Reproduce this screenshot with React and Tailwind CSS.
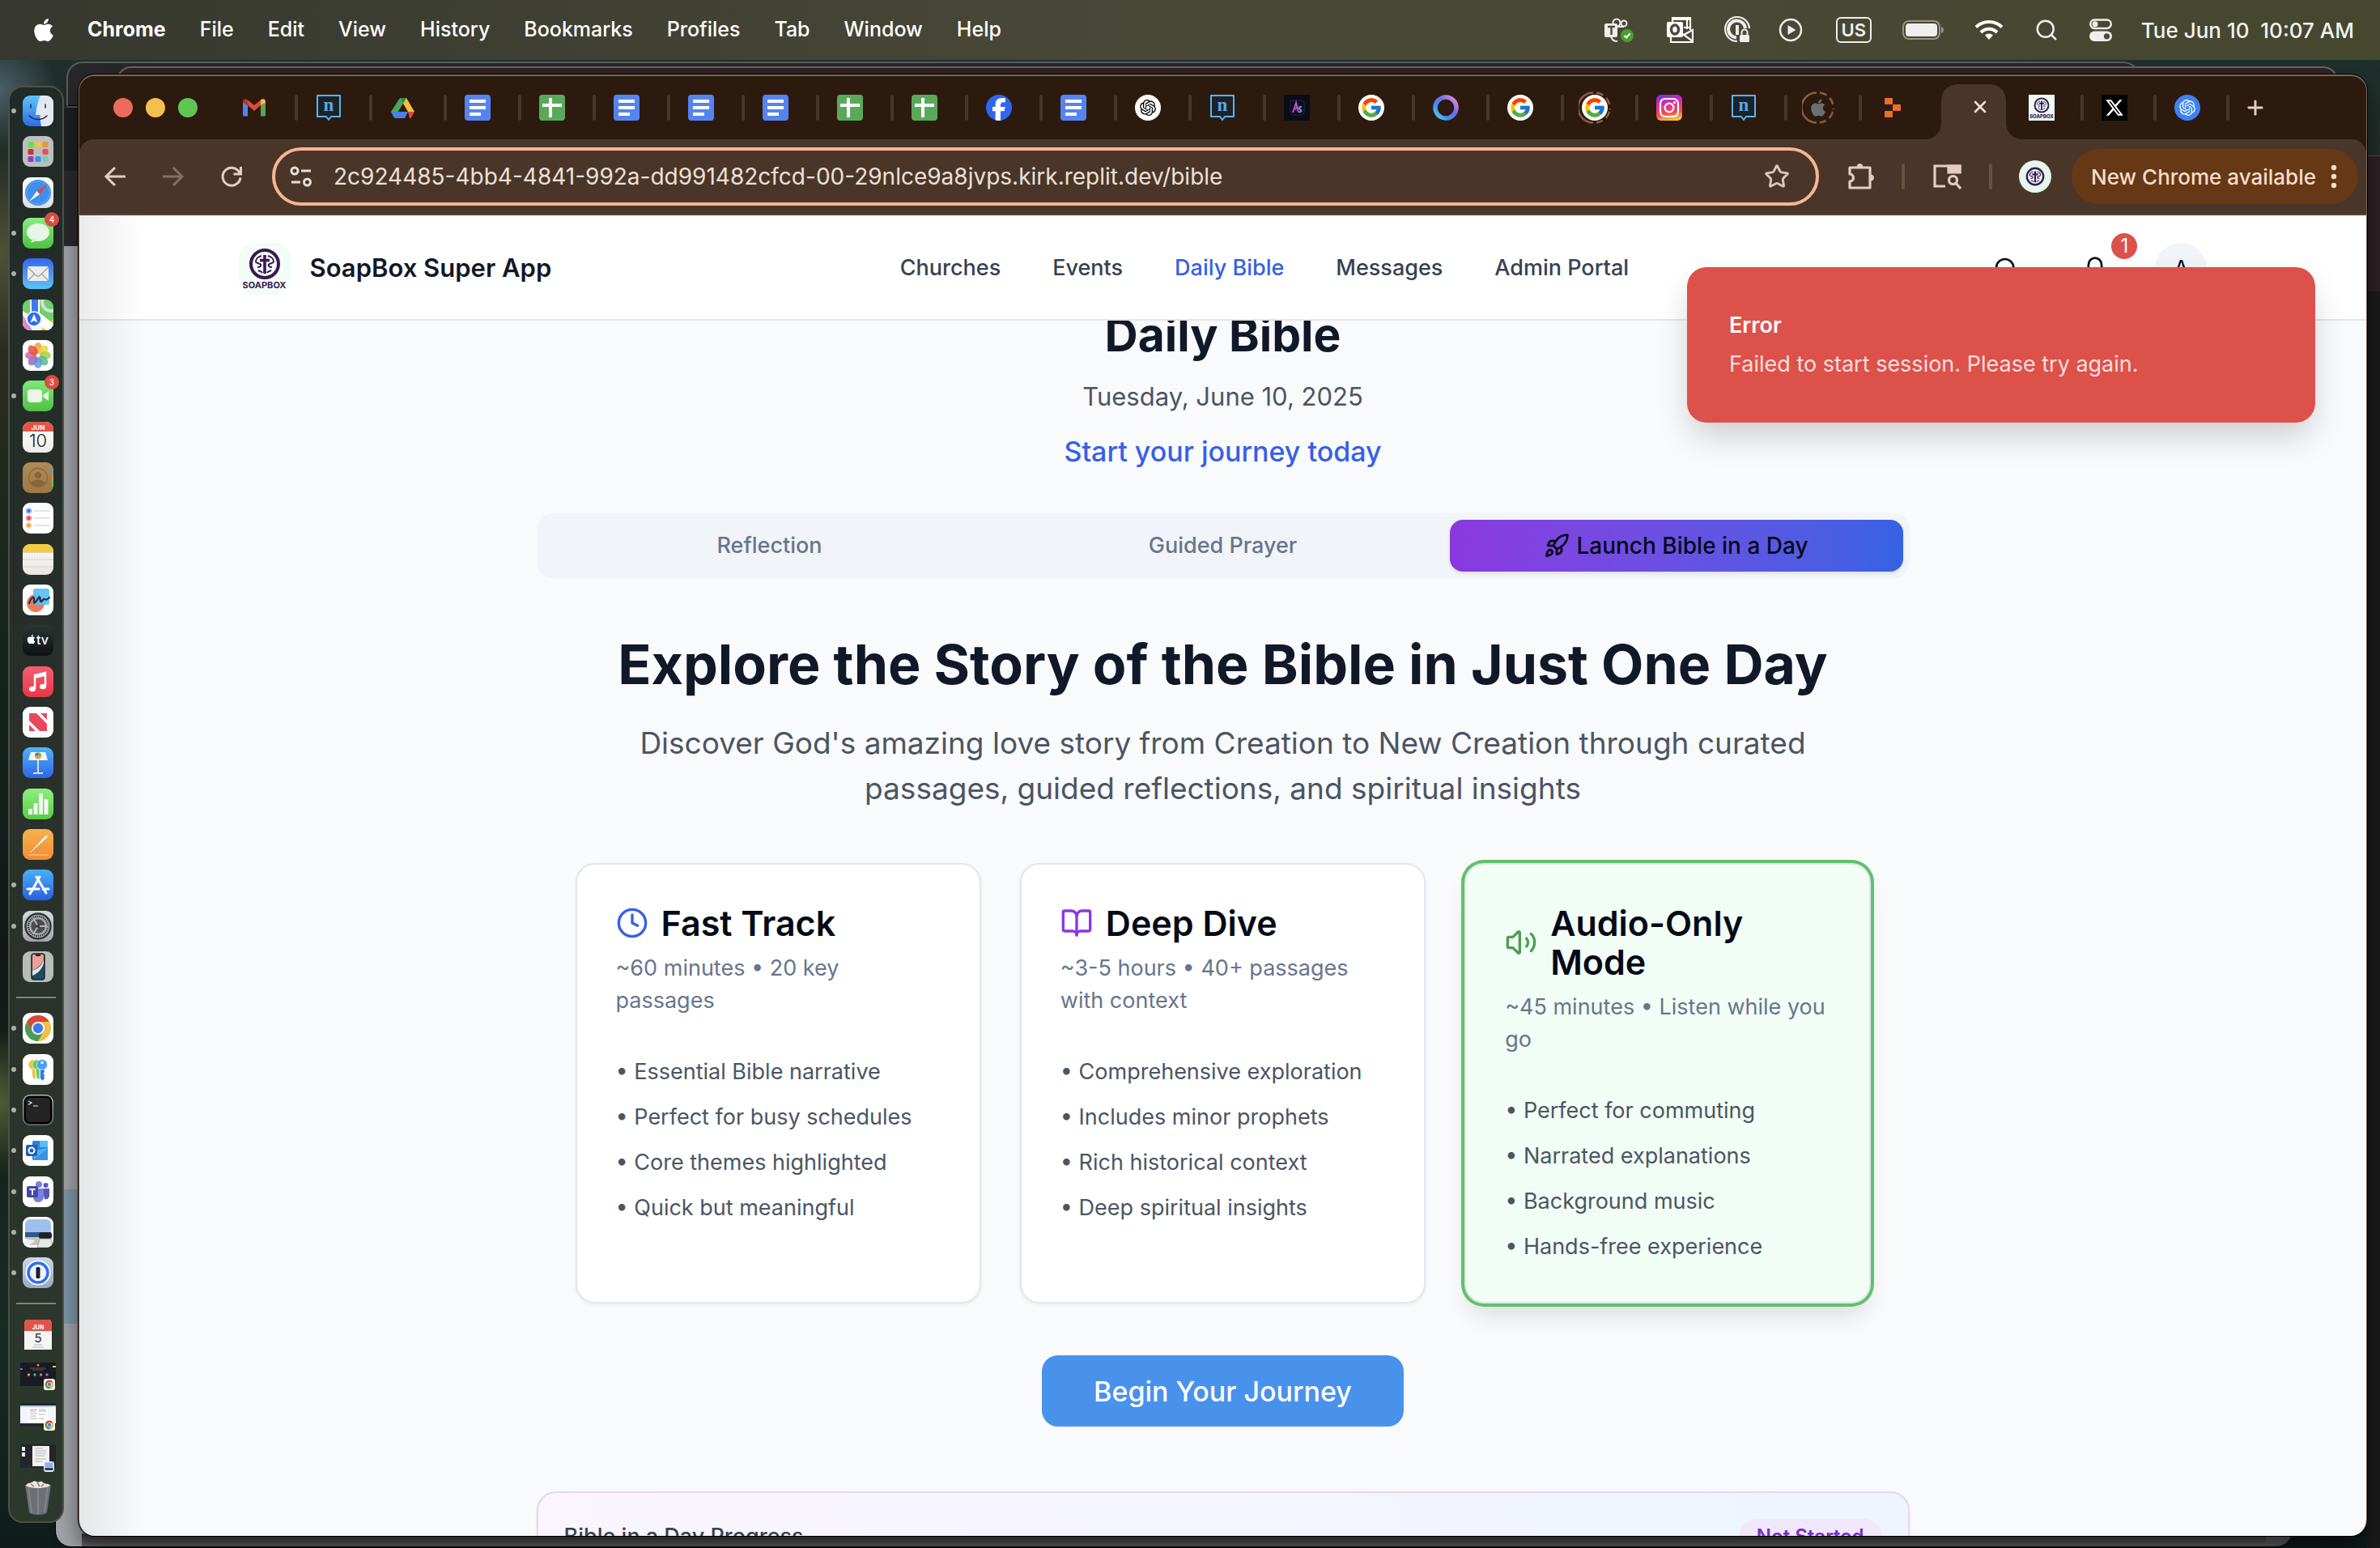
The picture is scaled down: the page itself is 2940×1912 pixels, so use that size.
import React from "react";
import { Rocket, Clock, BookOpen, Volume2, Search, Bell, Star, X, Plus } from "lucide-react";
import { FaApple, FaFacebookF, FaXTwitter } from "react-icons/fa6";
import { FcGoogle } from "react-icons/fc";
import { RiOpenaiFill } from "react-icons/ri";

/* ---------- shared marks ---------- */

function SoapMark({ className }) {
  return (
    <svg viewBox="0 0 40 40" className={className} fill="none" stroke="#3b1a4f" aria-hidden="true">
      <circle cx="20" cy="20" r="17" strokeWidth="4" />
      <path d="M20 9v23M14 15.500h12" strokeWidth="3.600" />
      <path d="M16 10c-4 1-7 4-7 7 0 2 3 2 5 3s2 4-3 4M24 10c4 1 7 4 7 7 0 2-3 2-5 3s-2 4 3 4M12 28c2 1 4 1 5 3M28 28c-2 1-4 1-5 3" strokeWidth="2" />
    </svg>
  );
}

/* ---------- favicons ---------- */

function Gmail() {
  return (
    <svg viewBox="0 0 32 32" className="size-8" aria-hidden="true">
      <path d="M2 9v16c0 1 .700 1.500 1.500 1.500H8V13z" fill="#4f86ec" />
      <path d="M30 9v16c0 1-.700 1.500-1.500 1.500H24V13z" fill="#55a557" />
      <path d="M8 13V6.500l8 6.500 8-6.500V13l-8 7z" fill="#dd4b3e" />
      <path d="M2 9c0-4 3.500-4.500 6-2.500V13l-6-3z" fill="#b3332b" />
      <path d="M30 9c0-4-3.500-4.500-6-2.500V13l6-3z" fill="#f3bf42" />
    </svg>
  );
}

function Notes() {
  return (
    <svg viewBox="0 0 32 32" className="size-8" aria-hidden="true">
      <path d="M2 1h28v26H19l-3 4-3-4H2z" fill="#1d2226" stroke="#58b4f5" strokeWidth="2" strokeLinejoin="round" />
      <text x="16" y="20" textAnchor="middle" fontFamily="Liberation Serif, serif" fontSize="23" fontWeight="700" fill="#5aa9e6">n</text>
    </svg>
  );
}

function Drive() {
  return (
    <svg viewBox="0 0 32 32" className="size-8" aria-hidden="true">
      <path d="M12 4h8L8 24l-3 4-4-7z" fill="#4fa45a" />
      <path d="M12 4h8l10 17h-8z" fill="#f3bf42" />
      <path d="M12 4l4 7 4-7z" fill="#2f8a48" />
      <path d="M1 21h21l-4 8H7c-1 0-2-.500-2.500-1.500z" fill="#4a7fe8" />
      <path d="M22 21h8l-3.500 6.500c-.500 1-1.500 1.500-2.500 1.500z" fill="#d94a3d" />
    </svg>
  );
}

function Doc() {
  return (
    <svg viewBox="0 0 32 32" className="size-8" aria-hidden="true">
      <rect width="32" height="32" rx="4" fill="#5584ef" />
      <path d="M6 8h20M6 16h20M6 24h14" stroke="#fff" strokeWidth="4" />
    </svg>
  );
}

function Sheet() {
  return (
    <svg viewBox="0 0 32 32" className="size-8" aria-hidden="true">
      <rect width="32" height="32" rx="4" fill="#5aa95b" />
      <path d="M4 13h24M14 4v24" stroke="#fff" strokeWidth="4" />
    </svg>
  );
}

function Facebook() {
  return (
    <span className="flex size-8 items-end justify-center overflow-hidden rounded-full bg-[#2f66f0] text-white">
      <FaFacebookF className="size-7" />
    </span>
  );
}

function OpenAI() {
  return (
    <span className="flex size-8 items-center justify-center rounded-full bg-white text-black">
      <RiOpenaiFill className="size-6" />
    </span>
  );
}

function OpenAIBlue() {
  return (
    <span className="flex size-8 items-center justify-center rounded-full bg-[#3c83f0] text-white">
      <RiOpenaiFill className="size-6" />
    </span>
  );
}

function StudioMark() {
  return (
    <svg viewBox="0 0 32 32" className="size-8" aria-hidden="true">
      <rect width="32" height="32" fill="#0a0c18" />
      <rect x="8" y="7" width="17" height="18" rx="4" fill="none" stroke="#1e2c44" />
      <path d="M11 22l4-12 3 12M12 18c3 0 4-2 5-3" fill="none" stroke="#c04fc9" strokeWidth="2" />
      <path d="M22 15c-3-1-4 2-2 3s2 4-1 3" fill="none" stroke="#6d8fe0" strokeWidth="2" />
    </svg>
  );
}

function Google() {
  return (
    <span className="flex size-8 items-center justify-center rounded-full bg-white">
      <FcGoogle className="size-7" />
    </span>
  );
}

function RingMark() {
  return (
    <svg viewBox="0 0 32 32" className="size-8" aria-hidden="true">
      <defs>
        <linearGradient id="ring" x1="1" y1="0" x2="0" y2="1">
          <stop offset="0" stopColor="#ef8fd0" />
          <stop offset="0.400" stopColor="#6d6cf0" />
          <stop offset="0.700" stopColor="#3f8df2" />
          <stop offset="1" stopColor="#5fd6e6" />
        </linearGradient>
      </defs>
      <circle cx="16" cy="16" r="13" fill="none" stroke="url(#ring)" strokeWidth="5.500" />
    </svg>
  );
}

function Loading({ children }) {
  return (
    <span className="relative -mx-1 flex size-10 items-center justify-center">
      <svg viewBox="0 0 40 40" className="absolute inset-0 size-10" fill="none" stroke="#8d5c3f" strokeWidth="2.500" aria-hidden="true">
        <path d="M18 1.500A18.500 18.500 0 0 0 18 38.500" />
        <path d="M22 1.500A18.500 18.500 0 0 1 38.500 22M38 25A18.500 18.500 0 0 1 22 38.500" strokeDasharray="9 5" />
      </svg>
      {children}
    </span>
  );
}

function Instagram() {
  return (
    <svg viewBox="0 0 32 32" className="size-8" aria-hidden="true">
      <defs>
        <linearGradient id="ig" x1="0.200" y1="0" x2="0.400" y2="1">
          <stop offset="0" stopColor="#7a2ff0" />
          <stop offset="0.400" stopColor="#e0309a" />
          <stop offset="0.750" stopColor="#f0504a" />
          <stop offset="1" stopColor="#f8c140" />
        </linearGradient>
      </defs>
      <rect width="32" height="32" rx="6" fill="url(#ig)" />
      <rect x="5" y="5" width="22" height="22" rx="6" fill="none" stroke="#fff" strokeWidth="2.200" />
      <circle cx="16" cy="16" r="5.400" fill="none" stroke="#fff" strokeWidth="2.200" />
      <circle cx="22.400" cy="9.600" r="1.600" fill="#fff" />
    </svg>
  );
}

function ReplitMark() {
  return (
    <svg viewBox="0 0 32 32" className="size-8" fill="#e86f2c" aria-hidden="true">
      <rect x="6" y="4" width="10" height="8" rx="1" />
      <rect x="16" y="12" width="10" height="8" rx="1" />
      <rect x="6" y="20" width="10" height="8" rx="1" />
    </svg>
  );
}

function SoapFavicon() {
  return (
    <span className="flex size-8 flex-col items-center justify-center bg-[#effaf4]">
      <SoapMark className="size-5" />
      <span className="text-[6px] leading-[7px] font-extrabold text-[#3b1a4f]">SOAPBOX</span>
    </span>
  );
}

function XFavicon() {
  return (
    <span className="flex size-8 items-center justify-center bg-black text-white">
      <FaXTwitter className="size-6" />
    </span>
  );
}

const tabsBefore = [
  ["Gmail", Gmail], ["Notes", Notes], ["Drive", Drive], ["Document", Doc], ["Spreadsheet", Sheet],
  ["Document", Doc], ["Document", Doc], ["Document", Doc], ["Spreadsheet", Sheet], ["Spreadsheet", Sheet],
  ["Facebook", Facebook], ["Document", Doc], ["ChatGPT", OpenAI], ["Notes", Notes], ["Studio", StudioMark],
  ["Google", Google], ["Ring", RingMark], ["Google", Google],
  ["Google loading", () => <Loading><Google /></Loading>],
  ["Instagram", Instagram], ["Notes", Notes],
  ["Apple loading", () => <Loading><FaApple className="size-6 text-[#6e6e70]" /></Loading>],
  ["Replit", ReplitMark],
];

const tabsAfter = [["SoapBox", SoapFavicon], ["X", XFavicon], ["ChatGPT", OpenAIBlue]];

/* ---------- menu bar ---------- */

function MenuBar() {
  const menus = ["File", "Edit", "View", "History", "Bookmarks", "Profiles", "Tab", "Window", "Help"];
  return (
    <header className="relative z-10 flex h-[74px] shrink-0 items-center justify-between bg-linear-to-r from-[#36382f] via-[#4a4938] to-[#45472f] pr-[32px] pl-[38px] text-[25px] font-medium text-white">
      <nav className="flex items-center gap-[42px]">
        <button aria-label="Apple menu" className="-mr-1 flex w-8 items-center justify-center"><FaApple className="size-8" /></button>
        <button className="font-bold">Chrome</button>
        {menus.map((m) => <button key={m}>{m}</button>)}
      </nav>
      <div className="flex items-center">
        <svg viewBox="0 0 40 34" className="mr-[38px] h-[34px] w-10" aria-label="Teams">
          <circle cx="17" cy="8" r="4.500" fill="none" stroke="#eee" strokeWidth="2" />
          <circle cx="26" cy="9" r="3.500" fill="none" stroke="#eee" strokeWidth="2" />
          <path d="M18 13h8M10 23c0 6 4 8 8 8" fill="none" stroke="#eee" strokeWidth="2" />
          <rect x="2" y="9" width="16" height="17" rx="2" fill="#eee" />
          <path d="M6 13h9M10.500 13v10" stroke="#4b4b38" strokeWidth="2.500" />
          <circle cx="30" cy="24" r="8" fill="#4a9f2e" />
          <path d="M26.500 24l2.500 2.500 4.500-5" fill="none" stroke="#fff" strokeWidth="2" />
        </svg>
        <svg viewBox="0 0 34 34" className="mr-[37px] size-[34px]" fill="none" stroke="#fff" strokeWidth="2.200" aria-label="Outlook">
          <path d="M8 8V2h22v15M8 4h22M22 14h8M26 4v12" />
          <path d="M6 24v8h27V17L22 23l11 8M22 23l-3-1" />
          <rect x="1" y="7" width="20" height="19" rx="2" fill="#fff" stroke="none" />
          <ellipse cx="11" cy="16.500" rx="4.500" ry="5.500" stroke="#4b4b38" strokeWidth="3.500" />
        </svg>
        <svg viewBox="0 0 34 34" className="mr-[34px] size-[34px]" fill="none" stroke="#eee" aria-label="1Password">
          <path d="M17 31A15 15 0 1 1 32 15" strokeWidth="2.200" />
          <path d="M16 26.500A10.500 10.500 0 1 1 27 15" strokeWidth="4" />
          <path d="M17 11v12" strokeWidth="4" />
          <rect x="20" y="23" width="12" height="9" rx="1.500" fill="#eee" stroke="none" />
          <path d="M22.500 23v-3a3.500 3.500 0 0 1 7 0v3" strokeWidth="2" />
        </svg>
        <svg viewBox="0 0 30 30" className="mr-[41px] size-[30px]" aria-label="Now playing">
          <circle cx="15" cy="15" r="13" fill="none" stroke="#eee" strokeWidth="2.500" />
          <path d="M11.500 9l10 6-10 6z" fill="#eee" />
        </svg>
        <span className="mr-[38px] flex h-8 w-11 items-center justify-center rounded-md border-2 border-[#eee] text-[22px] leading-none font-semibold text-[#eee]">US</span>
        <svg viewBox="0 0 52 24" className="mr-[37px] h-6 w-[52px]" aria-label="Battery">
          <rect x="1" y="1" width="45" height="22" rx="7" fill="none" stroke="#96958a" strokeWidth="2" />
          <rect x="4" y="4" width="39" height="16" rx="4" fill="#eee" />
          <path d="M48 8c4 1 4 7 0 8z" fill="#96958a" />
        </svg>
        <svg viewBox="0 0 36 26" className="mr-[38px] h-[26px] w-9" fill="none" stroke="#fff" strokeWidth="4" aria-label="Wi-Fi">
          <path d="M2 9.500a23 23 0 0 1 32 0M8 16a14 14 0 0 1 20 0" />
          <path d="M18 25l-5-5.500a7.500 7.500 0 0 1 10 0z" fill="#fff" stroke="none" />
        </svg>
        <Search className="mr-[38px] size-[30px] text-[#eee]" />
        <svg viewBox="0 0 28 28" className="mr-[36px] size-7" aria-label="Control Center">
          <rect x="1.200" y="1.500" width="25.600" height="10.500" rx="5.250" fill="none" stroke="#eee" strokeWidth="2.400" />
          <circle cx="7" cy="6.800" r="3.500" fill="#eee" />
          <rect y="15.500" width="28" height="12.500" rx="6.250" fill="#eee" />
          <circle cx="21.500" cy="21.800" r="3.600" fill="#4b4b38" />
        </svg>
        <span className="text-[26px] whitespace-pre text-[#f2f2ee]">Tue Jun 10  10:07 AM</span>
      </div>
    </header>
  );
}

/* ---------- dock ---------- */

function Tile({ fill = "#fff", to, children }) {
  const id = React.useId();
  return (
    <svg viewBox="0 0 38 38" className="size-[38px]" aria-hidden="true">
      <defs>
        <linearGradient id={id} x1="0" y1="0" x2="0" y2="1">
          <stop offset="0" stopColor={fill} />
          <stop offset="1" stopColor={to || fill} />
        </linearGradient>
        <clipPath id={id + "c"}><rect width="38" height="38" rx="9" /></clipPath>
      </defs>
      <g clipPath={`url(#${id + "c"})`}>
        <rect width="38" height="38" fill={`url(#${id})`} />
        {children}
      </g>
    </svg>
  );
}

const petals = ["#f0a03c", "#e8d63c", "#a9cf45", "#5cb98f", "#5a9fdc", "#8a70c8", "#c86aa8", "#e8503c"];

function ChromeBall({ cx = 19, cy = 19, r = 16 }) {
  return (
    <g transform={`translate(${cx} ${cy}) scale(${r / 16})`}>
      <circle r="16" fill="#f3bf42" />
      <path d="M0-8H13.860A16 16 0 0 0-13.860-8L-6.900 4z" fill="#d5493c" />
      <path d="M-13.860-8A16 16 0 0 0 0 16L6.900 4 0 8-6.900 4z" fill="#4a9d55" />
      <circle r="8" fill="#fff" />
      <circle r="6.200" fill="#3f7be8" />
    </g>
  );
}

const dockApps = [
  ["Finder", true, null, <Tile fill="#5cc4f8" to="#2f6be8"><path d="M22 0h16v38H23c-1-5-1.500-9-1.500-14H16C17 14 19 6 22 0z" fill="#e4e8ef" /><path d="M10 11v4M28 11v4" stroke="#20304a" strokeWidth="1.500" strokeLinecap="round" /><path d="M8 25c6 6 16 6 22 0" fill="none" stroke="#20304a" strokeWidth="1.500" strokeLinecap="round" /></Tile>],
  ["Launchpad", false, null, <Tile fill="#bcbfbf">{["#6fdc4f", "#f3c33c", "#e8963a", "#d3322a", "#b5bcc0", "#ee4a60", "#8a3fd0", "#3c8cf2", "#6fd0b0"].map((c, i) => <rect key={i} x={6.500 + (i % 3) * 9} y={7 + Math.floor(i / 3) * 9} width="7" height="7" rx="1.500" fill={c} />)}</Tile>],
  ["Safari", false, null, <Tile fill="#ffffff" to="#dcdde0"><circle cx="19" cy="19" r="16" fill="#3f8fec" /><circle cx="19" cy="19" r="14" fill="none" stroke="#9ccaf8" strokeWidth="1.500" strokeDasharray="0.600 1.600" /><path d="M31 8L21 21l-3.500-4z" fill="#e5443a" /><path d="M8 30l9.500-13 3.500 4z" fill="#f4f4f4" /></Tile>],
  ["Messages", true, "4", <Tile fill="#86ef7e" to="#4ec143"><ellipse cx="19" cy="18" rx="14" ry="11" fill="#e9f5e6" /><path d="M12 25c0 3-1 4-3 5 4 1 7-1 9-3z" fill="#d9ecd5" /></Tile>],
  ["Mail", true, null, <Tile fill="#3566e8" to="#5cc3f8"><rect x="6" y="10" width="26" height="18" rx="2" fill="#ececec" /><path d="M6 11l10.500 10c1.500 1.500 3.500 1.500 5 0L32 11M6 28l9-9M32 28l-9-9" fill="none" stroke="#9a9ea3" strokeWidth="1.200" /></Tile>],
  ["Maps", false, null, <Tile fill="#6ed06a"><path d="M0 14l38 24H0z" fill="#f5f5f5" /><path d="M0 19l12 19H0z" fill="#d98bd0" /><path d="M22 38l16-14v14z" fill="#f0c93c" /><path d="M18 14l20 16v8h-8L14 26z" fill="#fff" /><rect x="9" y="-2" width="12" height="24" fill="#fff" /><rect x="11" y="-2" width="8" height="24" fill="#3a78ee" /><circle cx="35" cy="3" r="11" fill="none" stroke="#d8dcdc" strokeWidth="4" /><circle cx="14" cy="24" r="9" fill="#2f6fe8" stroke="#fff" strokeWidth="1.500" /><path d="M14 18l4.500 10.500L14 26l-4.500 2.500z" fill="#fff" /></Tile>],
  ["Photos", false, null, <Tile>{petals.map((c, i) => <ellipse key={c} cx="19" cy="10" rx="5" ry="7" fill={c} opacity="0.850" transform={`rotate(${i * 45} 19 19)`} />)}</Tile>],
  ["FaceTime", true, "3", <Tile fill="#7eea77" to="#4fc144"><rect x="6" y="11" width="18" height="16" rx="4" fill="#eef3ec" /><path d="M25 18l7-5v12l-7-5z" fill="#eef3ec" /></Tile>],
  ["Calendar", false, null, <Tile fill="#ffffff" to="#ececea"><rect width="38" height="12" fill="#e2544a" /><text x="19" y="9.500" textAnchor="middle" fontSize="8" fontWeight="700" fill="#fff" fontFamily="Inter, sans-serif">JUN</text><text x="19" y="31" textAnchor="middle" fontSize="22" fill="#222" fontWeight="300" fontFamily="Inter, sans-serif">10</text></Tile>],
  ["Contacts", false, null, <Tile fill="#b08a56" to="#9c7846"><rect x="36" y="8" width="2" height="7" fill="#4fa6e8" /><rect x="36" y="15" width="2" height="7" fill="#ee8a3a" /><rect x="36" y="22" width="2" height="8" fill="#5fc85a" /><circle cx="19" cy="19" r="11.500" fill="none" stroke="#87673a" strokeWidth="1.300" /><circle cx="19" cy="16" r="4.300" fill="#87673a" /><path d="M10 26c3-6 15-6 18 0-4 5-14 5-18 0z" fill="#87673a" /></Tile>],
  ["Reminders", false, null, <Tile>{["#2f72ee", "#e5443a", "#f09a36"].map((c, i) => <g key={c}><circle cx="7.500" cy={10 + i * 9} r="2.200" fill={c} /><circle cx="7.500" cy={10 + i * 9} r="3.200" fill="none" stroke={c} strokeWidth="0.700" /><path d={`M14 ${10 + i * 9}h20`} stroke="#c9c9c9" /></g>)}</Tile>],
  ["Notes app", false, null, <Tile fill="#fbfaf7" to="#e9e7e2"><rect width="38" height="10" fill="#f6ca3e" /><path d="M0 10.500h38" stroke="#b6b0a0" strokeDasharray="1 1" /><path d="M0 19h38M0 28h38" stroke="#d2d0cb" /></Tile>],
  ["Freeform", false, null, <Tile><circle cx="16" cy="23" r="11" fill="#ee7a5a" /><rect x="13" y="5" width="20" height="20" rx="2" fill="#57bff0" opacity="0.900" /><path d="M8 23c3-8 7-10 6-3s4-1 6-4 1 6 3 5 2-4 4-3 3 1 6-2" fill="none" stroke="#17324f" strokeWidth="2.200" strokeLinecap="round" /></Tile>],
  ["TV", false, null, <Tile fill="#2a3634" to="#0d1112"><text x="17" y="24" fontSize="16" fontWeight="500" fill="#fff" fontFamily="Inter, sans-serif">tv</text><FaApple x="4" y="11" size="13" color="#fff" /></Tile>],
  ["Music", false, null, <Tile fill="#f65d72" to="#e63848"><path d="M15 28V11l13-3v16" fill="none" stroke="#fff" strokeWidth="2.500" /><path d="M15 11l13-3v4l-13 3z" fill="#fff" /><ellipse cx="12" cy="28" rx="4" ry="3.200" fill="#fff" /><ellipse cx="25" cy="25" rx="4" ry="3.200" fill="#fff" /></Tile>],
  ["News", false, null, <Tile><path d="M8 8h9l13 13v9h-9L8 17z" fill="#e8485e" /><path d="M22 8h8v8zM8 22v8h8z" fill="#e8485e" /></Tile>],
  ["Keynote", false, null, <Tile fill="#4fb4f8" to="#2f66e6"><path d="M10 6h18l3 10H7z" fill="#f5f5f5" /><circle cx="19" cy="10.500" r="4" fill="#e9a23c" /><path d="M19 10.500v-4a4 4 0 0 1 4 4z" fill="#5cb860" /><path d="M19 10.500h-4a4 4 0 0 1 4-4z" fill="#4a7fe8" /><path d="M19 16v16M13 32h12" stroke="#d8dde3" strokeWidth="2" /></Tile>],
  ["Numbers", false, null, <Tile fill="#8ef07c" to="#55cc44"><path d="M9.500 32v-7M16 32V18M22.500 32V6M29 32V13" stroke="#f3f8f1" strokeWidth="5" /></Tile>],
  ["Pages", false, null, <Tile fill="#f5b44c" to="#f08c34"><path d="M7 31L26 10c2-2 4-3 5-3s0 3-2 5L10 29z" fill="#f6f1ea" stroke="#c88a4a" strokeWidth="0.500" /><path d="M7 32h25" stroke="#fbd9a6" strokeWidth="1.200" /></Tile>],
  ["App Store", true, null, <Tile fill="#4ab0f6" to="#2a5fe0"><path d="M21 9L11 27M17 9l12 20M6 24h14M25 24h7M9 30l1-2" stroke="#fff" strokeWidth="3" strokeLinecap="round" /></Tile>],
  ["Settings", true, null, <Tile fill="#d0dbe1" to="#a4a5a8"><circle cx="19" cy="19" r="15.500" fill="#b5b7b9" stroke="#333" strokeWidth="2.500" /><circle cx="19" cy="19" r="12" fill="none" stroke="#333" strokeWidth="2.500" strokeDasharray="1.500 1" /><circle cx="19" cy="19" r="9" fill="#4a4c4e" stroke="#8b8d8f" /><path d="M19 19h12M19 19l-6-10M19 19l-6 10" stroke="#b5b7b9" strokeWidth="2" /><circle cx="19" cy="19" r="2" fill="#333" /></Tile>],
  ["iPhone Mirroring", false, null, <Tile fill="#b9bdb9"><rect x="11" y="3" width="16" height="32" rx="3" fill="#1d4a66" /><path d="M12 4h14c0 10-3 14-14 20z" fill="#eda093" /><path d="M26 8c-1 9-6 13-14 16v6c8-3 12-9 14-15z" fill="#d9e6ea" /><rect x="11" y="3" width="16" height="32" rx="3" fill="none" stroke="#22282c" strokeWidth="1.500" /><path d="M16 5h6" stroke="#22282c" strokeWidth="2" /></Tile>],
];

const dockRunning = [
  ["Chrome", true, null, <Tile><ChromeBall /></Tile>],
  ["Passwords", true, null, <Tile><g stroke="#fff" strokeWidth="0.600"><circle cx="13" cy="13" r="6" fill="#f0c040" /><path d="M11 18h5v14l-4-3z" fill="#f0c040" /><circle cx="18" cy="13" r="6" fill="#62c962" /><path d="M16 18h5v14l-4-3z" fill="#62c962" /><circle cx="24" cy="13" r="6.500" fill="#4a9df2" /><path d="M21.500 19h5l1 3-2 2 2 2-1 2 1 2-3 3-3-3z" fill="#2f78ea" /></g><circle cx="24" cy="10.500" r="1.700" fill="#fff" /></Tile>],
  ["Terminal", true, null, <Tile fill="#a8bcbc" to="#6d7b7b"><rect x="1.500" y="1.500" width="35" height="35" rx="7.500" fill="#000" /><rect x="4" y="4" width="30" height="30" rx="5" fill="#242424" /><path d="M7 8l4 2-4 2.500M13 14h6" fill="none" stroke="#eee" strokeWidth="1.200" /></Tile>],
  ["Outlook", true, null, <Tile><rect x="12" y="7" width="19" height="24" rx="2" fill="#2f7fd6" /><rect x="21" y="7" width="10" height="8" fill="#57bdf2" /><path d="M12 19l19-3v15H14z" fill="#4fb0ee" /><path d="M12 31l19-14v14z" fill="#3a93e0" /><rect x="4" y="12" width="14" height="14" rx="2" fill="#1e5fb8" /><circle cx="11" cy="19" r="3.500" fill="none" stroke="#fff" strokeWidth="2" /></Tile>],
  ["Teams", true, null, <Tile><circle cx="20" cy="10" r="4" fill="#7a80e0" /><circle cx="28.500" cy="11" r="3" fill="#5459b8" /><path d="M24 15h9v8c0 4-3 6-6 5z" fill="#5459b8" /><path d="M13 15h13v10c0 4-3 7-7 7s-6-3-6-7z" fill="#7a80e0" /><rect x="5" y="12" width="14" height="14" rx="2" fill="#4349a5" /><path d="M8.500 16h7M12 16v7" stroke="#fff" strokeWidth="1.800" /></Tile>],
  ["Preview", true, null, <Tile><rect x="3" y="3" width="32" height="32" rx="6" fill="#9fc0ee" /><path d="M3 19h32v6H3z" fill="#2f5a8a" /><path d="M3 25h32v10H3z" fill="#c9c3b6" /><path d="M3 27l12 2-6 6H3z" fill="#eef0f0" /><rect x="20" y="19" width="16" height="8" rx="3" fill="#202224" /><path d="M21 27h14l3 11H18z" fill="#e4e6e8" stroke="#888" strokeWidth="0.700" /></Tile>],
  ["1Password", true, null, <Tile fill="#cdd6e6" to="#9ba7bd"><circle cx="19" cy="19" r="15.500" fill="#fff" /><circle cx="19" cy="19" r="12" fill="#f3f7fd" stroke="#2f6fee" strokeWidth="3.500" /><rect x="16.500" y="12" width="5" height="14" rx="1.500" fill="#15203a" /></Tile>],
];

function Thumb({ dark, light, children }) {
  return (
    <svg viewBox="0 0 44 36" className="h-9 w-11" aria-hidden="true">
      <rect y="2" width="44" height="29" fill={dark ? "#1a1b22" : "#23262a"} />
      {light && <rect y="5" width="44" height="22" fill="#f2f5fb" />}
      {children}
    </svg>
  );
}

const dockFiles = [
  ["June 5 file", false, null, <svg viewBox="0 0 38 40" className="h-10 w-[38px]" aria-hidden="true"><path d="M4 1h30l2 4v33H2V5z" fill="#f5f5f3" /><path d="M4 1h30l2 4v10H2V5z" fill="#e0544a" /><text x="19" y="13" textAnchor="middle" fontSize="7" fontWeight="700" fill="#fff" fontFamily="Inter, sans-serif">JUN</text><text x="19" y="29" textAnchor="middle" fontSize="15" fill="#222" fontFamily="Inter, sans-serif">5</text><path d="M14 32h10M12 35h14" stroke="#aaa" strokeWidth="0.800" /></svg>],
  ["Chrome window", false, null, <Thumb dark><g><path d="M12 9h20M15 11h14" stroke="#55575f" /><circle cx="22" cy="5" r="1.500" fill="#e88b5a" />{["#e8985a", "#4ab890", "#e07a5a", "#9a6ae0"].map((c, i) => <circle key={c} cx={10.500 + i * 7.500} cy="17" r="1.700" fill={c} />)}<rect x="40" y="6" width="4" height="2" fill="#f0c93c" /><rect y="9" width="3" height="2" fill="#4a7fe8" /></g><rect x="29" y="22" width="14" height="14" rx="3" fill="#fff" /><ChromeBall cx={36} cy={29} r={5.500} /></Thumb>],
  ["Document window", false, null, <Thumb light><path d="M0 6h44" stroke="#bcd0ee" strokeWidth="2" /><rect x="10" y="8" width="24" height="19" fill="#fff" /><path d="M12 10h9M12 12h8M12 15h9M12 18h7M12 21h9M23 10h8M23 12h9M23 16h8M23 21h6" stroke="#8a8d92" strokeWidth="0.700" /><rect x="29" y="22" width="14" height="14" rx="3" fill="#fff" /><ChromeBall cx={36} cy={29} r={5.500} /></Thumb>],
  ["Preview window", false, null, <Thumb><rect x="15" y="4" width="21" height="25" fill="#f2f2f2" /><path d="M18 7h10M18 10h14M18 13h14M18 16h12M18 20h14M18 23h9" stroke="#999" strokeWidth="0.700" /><rect x="2" y="5" width="4" height="5" fill="#eee" /><rect x="2" y="12" width="4" height="5" fill="#eee" /><rect x="29" y="23" width="13" height="13" rx="3" fill="#dfe8f4" /><rect x="30.500" y="24.500" width="10" height="6" fill="#8db4e8" /><path d="M30.500 31h10v3h-10z" fill="#2f3f55" /></Thumb>],
  ["Trash", false, null, <svg viewBox="0 0 34 44" className="h-11 w-[34px]" aria-hidden="true"><path d="M1 6l5 34c2 4 20 4 22 0L33 6z" fill="#6a7074" /><path d="M5 8l4 32M29 8l-4 32M17 9v33" stroke="#989da0" strokeWidth="2" opacity="0.500" /><path d="M2 7c2-4 5-3 7-4s3-3 6-1 5-2 8 1 6 0 9 4c-6 4-24 4-30 0z" fill="#e8e6e2" /><path d="M8 5l4 3M16 3l3 5M24 5l-3 3" stroke="#b0703c" strokeWidth="1.500" /></svg>],
];

function DockItem({ item }) {
  const [label, running, badge, icon] = item;
  return (
    <li className="flex min-h-0 flex-1 items-center">
      <span className={running ? "ml-[2px] size-[6px] rounded-full bg-[#a9b0a8]" : "ml-[2px] size-[6px]"} />
      <button aria-label={label} className="relative flex flex-1 items-center justify-center pr-[4px]">
        {icon}
        {badge && (
          <span className="absolute -top-[7px] right-1 flex size-[18px] items-center justify-center rounded-full bg-[#dd4c3f] text-[10px] font-medium text-white">{badge}</span>
        )}
      </button>
    </li>
  );
}

function Dock() {
  return (
    <nav aria-label="Dock" className="relative z-10 mt-8 mb-[31px] ml-[10px] flex w-[69px] shrink-0 flex-col rounded-[18px] border-2 border-[#4b504a] bg-linear-to-b from-[#202a26] via-[#2a302b] to-[#2c382c] py-1">
      <ul className="flex flex-[22] flex-col">{dockApps.map((i) => <DockItem key={i[0]} item={i} />)}</ul>
      <hr className="mx-2 my-3 border-t-2 border-[#7d8374]" />
      <ul className="flex flex-[7] flex-col">{dockRunning.map((i) => <DockItem key={i[0]} item={i} />)}</ul>
      <hr className="mx-2 my-3 border-t-2 border-[#7d8374]" />
      <ul className="flex flex-[5] flex-col">{dockFiles.map((i) => <DockItem key={i[0]} item={i} />)}</ul>
    </nav>
  );
}

/* ---------- browser chrome ---------- */

function Tab({ tab, narrow, last }) {
  const [label, Icon] = tab;
  return (
    <button aria-label={label} className={"flex h-8 min-w-0 items-center justify-between " + (narrow ? "w-[90px] pl-[22px]" : "w-[92px] pl-[22px]")}>
      <Icon />
      <span className={last ? "h-8 w-1" : "h-8 w-1 rounded-full bg-[#49362a]"} />
    </button>
  );
}

function TabStrip() {
  return (
    <div className="flex h-[78px] items-center pl-[42px]">
      <div className="mr-8 flex gap-4">
        <button aria-label="Close window" className="size-6 rounded-full bg-[#ec6a5e]" />
        <button aria-label="Minimize window" className="size-6 rounded-full bg-[#f4bf4f]" />
        <button aria-label="Zoom window" className="size-6 rounded-full bg-[#61c554]" />
      </div>
      {tabsBefore.map((t, i) => <Tab key={i} tab={t} last={i === tabsBefore.length - 1} />)}
      <div className="relative ml-[6px] flex h-[68px] w-20 items-center justify-center self-end rounded-t-[20px] bg-[#4a3629] pl-4 text-[#f3e3da]">
        <svg viewBox="0 0 20 20" className="absolute bottom-0 -left-5 size-5" aria-hidden="true"><path d="M20 0v20H0A20 20 0 0 0 20 0z" fill="#4a3629" /></svg>
        <svg viewBox="0 0 20 20" className="absolute -right-5 bottom-0 size-5" aria-hidden="true"><path d="M0 0v20h20A20 20 0 0 1 0 0z" fill="#4a3629" /></svg>
        <button aria-label="Close tab" className="mb-3"><X className="size-6" strokeWidth={2.500} /></button>
      </div>
      <div className="ml-[6px] flex">
        {tabsAfter.map((t) => <Tab key={t[0]} tab={t} narrow />)}
      </div>
      <button aria-label="New tab" className="ml-[18px] text-[#e6cdbf]"><Plus className="size-7" strokeWidth={2.500} /></button>
    </div>
  );
}

function Toolbar() {
  return (
    <div className="flex h-[94px] items-center rounded-t-[18px] border-b-2 border-[#574539] bg-[#4a3629] pr-[10px] pl-[30px] text-[#e6cdbf]">
      <button aria-label="Back">
        <svg viewBox="0 0 28 28" className="size-7" fill="none" stroke="currentColor" strokeWidth="3"><path d="M27 14H3M14 3L3 14l11 11" /></svg>
      </button>
      <button aria-label="Forward" className="ml-[44px] text-[#857063]">
        <svg viewBox="0 0 28 28" className="size-7" fill="none" stroke="currentColor" strokeWidth="3"><path d="M1 14h24M14 3l11 11-11 11" /></svg>
      </button>
      <button aria-label="Reload" className="ml-[44px]">
        <svg viewBox="0 0 28 28" className="size-7" fill="none" stroke="currentColor" strokeWidth="3"><path d="M25 15.500A11 11 0 1 1 22 6.500l2.500 3M25.500 2v9h-9" /></svg>
      </button>
      <label className="ml-[36px] flex h-[72px] flex-1 items-center rounded-full border-4 border-[#f5b78f] pr-8 pl-[18px]">
        <svg viewBox="0 0 28 28" className="mr-[26px] size-7 shrink-0" fill="none" stroke="#eaddd6" strokeWidth="3" aria-label="Site information">
          <circle cx="6" cy="7" r="4" /><path d="M14 7h12M2 21h11" /><circle cx="21.500" cy="21" r="4" />
        </svg>
        <input aria-label="Address" className="min-w-0 flex-1 bg-transparent text-[28px] text-[#eee0d8] outline-none" defaultValue="2c924485-4bb4-4841-992a-dd991482cfcd-00-29nlce9a8jvps.kirk.replit.dev/bible" />
        <button type="button" aria-label="Bookmark"><Star className="size-8 text-[#d9c7bc]" strokeWidth={2.200} /></button>
      </label>
      <button aria-label="Extensions" className="ml-[34px]">
        <svg viewBox="0 0 36 36" className="size-9" fill="none" stroke="currentColor" strokeWidth="3.200" strokeLinejoin="round">
          <path d="M4 7h25v25H4v-8a4.500 4.500 0 0 0 0-9z" />
          <path d="M13 6a3.500 3.500 0 0 1 7 0zM30 16a3.500 3.500 0 0 1 0 7z" fill="currentColor" strokeWidth="1" />
        </svg>
      </button>
      <span className="ml-[32px] h-8 w-1 rounded-full bg-[#69523f]" />
      <button aria-label="Search tabs" className="ml-[34px]">
        <svg viewBox="0 0 36 32" className="h-8 w-9" fill="none" stroke="currentColor" strokeWidth="3.200">
          <path d="M16 28H3V3h31v9M16 28H3" /><path d="M20 3h14v8H20z" fill="currentColor" /><circle cx="25.500" cy="20.500" r="5" /><path d="M29 24l6 7" />
        </svg>
      </button>
      <span className="ml-[34px] h-8 w-1 rounded-full bg-[#69523f]" />
      <button aria-label="Profile" className="ml-[33px] flex size-10 items-center justify-center rounded-full bg-[#e6f6ef]"><SoapMark className="size-6" /></button>
      <button className="ml-[25px] flex h-[68px] items-center gap-[18px] rounded-full bg-[#663815] pr-[26px] pl-6 text-[26px] font-medium text-[#f8dccb]">
        New Chrome available
        <svg viewBox="0 0 8 30" className="h-[30px] w-2" fill="currentColor" aria-hidden="true"><circle cx="4" cy="4" r="3.200" /><circle cx="4" cy="15" r="3.200" /><circle cx="4" cy="26" r="3.200" /></svg>
      </button>
    </div>
  );
}

/* ---------- page ---------- */

function SiteHeader() {
  const links = ["Churches", "Events", "Daily Bible", "Messages", "Admin Portal"];
  return (
    <header className="relative z-10 border-b-2 border-[#e3e5ea] bg-white">
      <div className="mx-auto flex h-32 max-w-[2560px] items-center justify-between px-16 pt-[3px]">
        <a href="#home" className="flex items-center gap-6">
          <span className="flex size-16 flex-col items-center justify-center rounded-[20px] bg-[#f2fdf8]">
            <SoapMark className="size-10" />
            <span className="text-[11px] leading-[12px] font-bold text-[#3b1a4f]">SOAPBOX</span>
          </span>
          <span className="text-[31px] font-semibold text-[#111827]">SoapBox Super App</span>
        </a>
        <nav className="flex gap-16 text-[27px] font-medium">
          {links.map((l) => (
            <a key={l} href={"#" + l} className={l === "Daily Bible" ? "text-[#3660e6]" : "text-[#374151]"}>{l}</a>
          ))}
        </nav>
        <div className="flex items-center gap-[38px] text-[#0b0f1c]">
          <button aria-label="Search" className="flex w-[72px] justify-center"><Search className="size-8" /></button>
          <button aria-label="Notifications" className="relative flex w-[72px] justify-center">
            <Bell className="size-8" />
            <span className="absolute -top-7 -right-4 flex size-8 items-center justify-center rounded-full bg-[#dc524b] text-[24px] leading-none text-white">1</span>
          </button>
          <button aria-label="Account" className="flex size-16 items-center justify-center rounded-full bg-[#f1f4f8] text-[28px]">A</button>
        </div>
      </div>
    </header>
  );
}

const plans = [
  { title: ["Fast Track"], Icon: Clock, tint: "text-[#3660e6]", sub: ["~60 minutes • 20 key", "passages"], items: ["Essential Bible narrative", "Perfect for busy schedules", "Core themes highlighted", "Quick but meaningful"] },
  { title: ["Deep Dive"], Icon: BookOpen, tint: "text-[#8a38e0]", sub: ["~3-5 hours • 40+ passages", "with context"], items: ["Comprehensive exploration", "Includes minor prophets", "Rich historical context", "Deep spiritual insights"] },
  { title: ["Audio-Only", "Mode"], Icon: Volume2, tint: "text-[#4a9f53]", sub: ["~45 minutes • Listen while you", "go"], items: ["Perfect for commuting", "Narrated explanations", "Background music", "Hands-free experience"], selected: true },
];

function Lines({ lines }) {
  return lines.map((l) => <span key={l} className="block whitespace-nowrap">{l}</span>);
}

function Plan({ plan }) {
  const { Icon } = plan;
  return (
    <article className={"rounded-3xl border-2 border-[#e2e6ee] p-12 " + (plan.selected ? "bg-[#f2fdf5] shadow-[0_20px_30px_-6px_rgba(0,0,0,0.12)] ring-4 ring-[#5fc26b]" : "bg-white shadow-[0_2px_4px_rgba(0,0,0,0.05)]")}>
      <h3 className="flex items-center gap-4 text-[43px] leading-[48px] font-semibold text-[#060a17]">
        <Icon className={"size-10 shrink-0 " + plan.tint} />
        <span><Lines lines={plan.title} /></span>
      </h3>
      <p className="mt-3 text-[27px] leading-10 text-[#68758c]"><Lines lines={plan.sub} /></p>
      <ul className="mt-12 flex flex-col gap-4 text-[27px] leading-10 text-[#4b5563]">
        {plan.items.map((t) => <li key={t} className="whitespace-nowrap">• {t}</li>)}
      </ul>
    </article>
  );
}

function Page() {
  return (
    <div className="relative min-h-0 flex-1 overflow-hidden bg-[#f9fafc]">
      <SiteHeader />
      <main className="mx-auto -mt-[18px] max-w-[1696px] text-center">
        <h1 className="text-[57px] leading-[72px] font-bold text-[#111827]">Daily Bible</h1>
        <p className="mt-4 text-[31px] leading-[48px] text-[#4b5563]">Tuesday, June 10, 2025</p>
        <p className="mt-4 text-[34px] leading-[56px] font-medium text-[#3660e6]">Start your journey today</p>
        <div role="tablist" className="mt-12 grid h-20 grid-cols-3 rounded-[20px] bg-[#f1f4f8] p-2 text-[27px] font-medium text-[#68758c]">
          <button role="tab">Reflection</button>
          <button role="tab">Guided Prayer</button>
          <button role="tab" aria-selected="true" className="flex items-center justify-center gap-2 rounded-2xl bg-linear-to-r from-[#8a38e0] to-[#3562e4] text-[28px] text-[#060a17] shadow-[0_2px_4px_rgba(0,0,0,0.1)]">
            <Rocket className="size-8" />Launch Bible in a Day
          </button>
        </div>
        <h2 className="mt-[66px] text-[68px] leading-[80px] font-bold whitespace-nowrap text-[#111827]">Explore the Story of the Bible in Just One Day</h2>
        <p className="mt-[30px] text-[37px] leading-[56px] text-[#4b5563]">
          <Lines lines={["Discover God's amazing love story from Creation to New Creation through curated", "passages, guided reflections, and spiritual insights"]} />
        </p>
        <section className="mx-12 mt-16 grid grid-cols-3 gap-12 text-left">
          {plans.map((p) => <Plan key={p.items[0]} plan={p} />)}
        </section>
        <button className="mt-16 h-[88px] rounded-[20px] bg-[#4892ec] px-16 text-[34px] font-medium text-white">Begin Your Journey</button>
        <section className="mt-20 flex justify-between rounded-3xl border-2 border-[#e5d6fa] bg-linear-to-r from-[#faf5ff] to-[#eef5ff] p-8 pb-40 shadow-sm">
          <h4 className="text-[27px] leading-[44px] font-medium text-[#374151]">Bible in a Day Progress</h4>
          <span className="h-11 rounded-full bg-[#f1e7fd] px-[22px] text-[24px] leading-[44px] font-semibold text-[#7a2fc8]">Not Started</span>
        </section>
      </main>
      <div role="alert" className="absolute top-16 right-[63px] z-20 w-[776px] rounded-3xl bg-[#dc524b] p-[52px] text-[27px] leading-10 text-white shadow-[0_20px_40px_-4px_rgba(0,0,0,0.18)]">
        <p className="font-semibold">Error</p>
        <p className="mt-2 text-[#f9dedc]">Failed to start session. Please try again.</p>
      </div>
      <div className="pointer-events-none absolute inset-y-0 left-0 z-10 w-20 bg-linear-to-r from-black/8 to-transparent" />
    </div>
  );
}

/* ---------- desktop ---------- */

function BackWindows() {
  return (
    <div aria-hidden="true" className="absolute inset-0">
      <div className="absolute top-[2px] right-[297px] left-[82px] h-32 rounded-t-[20px] border-2 border-b-0 border-[#5b5b60] bg-[#28282b]" />
      <div className="absolute top-14 right-0 bottom-[1px] left-[68px] mr-[108px] overflow-hidden rounded-[20px] border border-black bg-linear-to-r from-[#a3a5a9] to-[#5e5f61]">
        <div className="h-20 border-t-2 border-[#55565a] bg-[#1f2022]" />
        <div className="h-[93px] bg-[#2b2b2d]" />
        <div className="mt-[1165px] h-[166px] w-8 bg-[#8097a8]" />
        <div className="absolute inset-x-8 bottom-0 h-4 bg-linear-to-b from-[#39393a] to-[#67686a]" />
      </div>
      <div className="absolute top-[118px] -right-5 bottom-4 w-9 border border-[#55484d] bg-[#2e2127]" />
      <div className="absolute top-[286px] right-0 bottom-0 w-4 bg-[#1a1a1b]" />
      <div className="absolute top-[8px] right-[52px] left-[144px] h-10 rounded-t-[18px] border-2 border-b-0 border-[#6d6260] bg-[#322223]" />
    </div>
  );
}

export default function App() {
  return (
    <div className="flex h-screen w-full flex-col overflow-hidden bg-[#14211b] font-['Inter',sans-serif]">
      <MenuBar />
      <div className="relative flex min-h-0 flex-1 bg-[radial-gradient(circle_at_0_2%,#4b5d66_0,transparent_70px),radial-gradient(circle_at_0_13%,#4f5136_0,transparent_120px),radial-gradient(circle_at_0_70%,#4f5a34_0,transparent_90px),linear-gradient(180deg,#1f2f2c,#2a2c20_20%,#14241d_40%,#131816_60%,#182c22_85%,#0f1c1a)]">
        <BackWindows />
        <Dock />
        <div className="relative mt-[18px] mr-4 mb-[15px] ml-[18px] flex min-w-0 flex-1 flex-col overflow-hidden rounded-[20px] border-t-2 border-r border-l border-[#7a675b] bg-[#2d1a0f] shadow-[0_0_0_1px_#000,0_16px_30px_rgba(0,0,0,0.5)]">
          <TabStrip />
          <Toolbar />
          <Page />
        </div>
      </div>
    </div>
  );
}
